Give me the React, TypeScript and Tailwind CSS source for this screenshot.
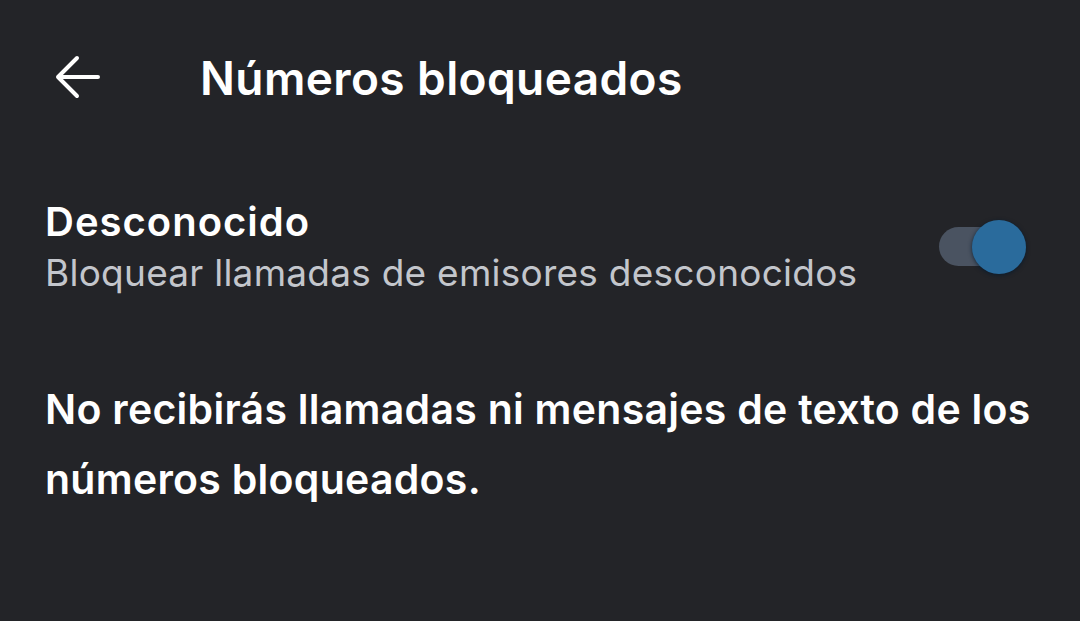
import React from "react";

function BackArrow() {
  return (
    <svg width="48" height="48" viewBox="0 0 48 48" fill="none">
      <path
        d="M45 24H5M24 5L5 24l19 19"
        stroke="#ffffff"
        strokeWidth="4"
        strokeLinecap="round"
        strokeLinejoin="round"
      />
    </svg>
  );
}

function Toggle({ on }: { on: boolean }) {
  return (
    <div className="relative h-[39px] w-[88px]">
      <div className="absolute left-0 top-0 h-[39px] w-[68px] rounded-full bg-[#4a5361]" />
      <div
        className={`absolute top-[-7px] h-[54px] w-[54px] rounded-full bg-[#2a6b9c] shadow-[0_1px_4px_rgba(5,25,45,0.8)] ${
          on ? "left-[33px]" : "left-[-15px]"
        }`}
      />
    </div>
  );
}

export default function App() {
  return (
    <div
      className="h-[621px] w-[1080px] overflow-hidden bg-[#232428] text-white"
      style={{ fontFamily: "Inter, Roboto, 'Liberation Sans', sans-serif" }}
    >
      <header className="flex h-[199px] items-start pt-[53px]">
        <div className="ml-[53px] flex h-[48px] w-[48px] items-center justify-center">
          <BackArrow />
        </div>
        <h1 className="ml-[99px] mt-[1px] text-[46px] font-semibold leading-[48px] tracking-[0.4px]">
          Números bloqueados
        </h1>
      </header>

      <div className="flex items-center justify-between pl-[45px] pr-[53px]">
        <div>
          <div className="text-[40px] font-semibold leading-[46px] tracking-[1px]">
            Desconocido
          </div>
          <div className="mt-[8px] text-[37px] leading-[40px] tracking-[0.25px] text-[#c3c6cc]">
            Bloquear llamadas de emisores desconocidos
          </div>
        </div>
        <Toggle on />
      </div>

      <p className="mt-[81px] pl-[45px] pr-[36px] text-[41px] font-semibold leading-[70px] tracking-[0.27px]">
        No recibirás llamadas ni mensajes de texto de los números bloqueados.
      </p>
    </div>
  );
}
